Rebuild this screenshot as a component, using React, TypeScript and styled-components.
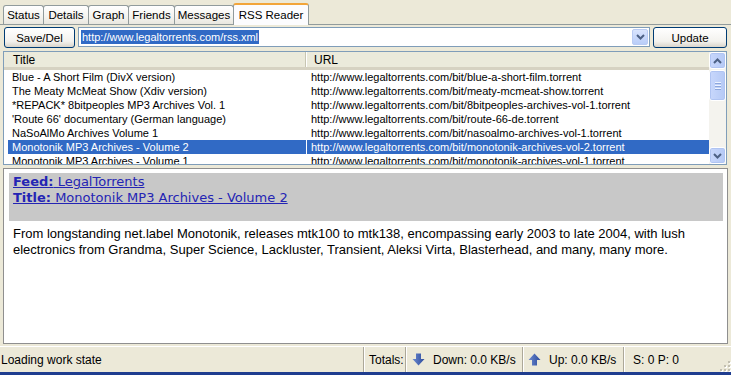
import styled, { createGlobalStyle } from "styled-components";

const GlobalStyle = createGlobalStyle`
  html, body {
    margin: 0;
    padding: 0;
    background: #ece9d8;
  }
  #root {
    width: 731px;
    height: 375px;
    overflow: hidden;
  }
`;

const Window = styled.div`
  display: flex;
  flex-direction: column;
  width: 731px;
  height: 375px;
  background: #ece9d8;
  font-family: "Liberation Sans", Arial, sans-serif;
  font-size: 11px;
  color: #000;
  box-sizing: border-box;
  border-bottom: 3px solid #1f3d8f;
`;

/* tabs */
const TabStrip = styled.div`
  display: flex;
  align-items: flex-end;
  height: 24px;
  padding-left: 3px;
  border-bottom: 1px solid #919b9c;
`;

const Tab = styled.div<{ $active?: boolean; $w: number }>`
  display: flex;
  align-items: center;
  justify-content: center;
  box-sizing: border-box;
  width: ${({ $w }) => $w + 1}px;
  height: ${({ $active }) => ($active ? "22px" : "19px")};
  margin-bottom: ${({ $active }) => ($active ? "-1px" : "0")};
  margin-right: -1px;
  border: 1px solid #919b9c;
  border-bottom: none;
  border-top: ${({ $active }) => ($active ? "2px solid #f2a53a" : "1px solid #919b9c")};
  border-radius: 3px 3px 0 0;
  background: ${({ $active }) =>
    $active ? "#fcfcfe" : "linear-gradient(#ffffff, #f4f3ee 60%, #e9e7df)"};
  font-size: 11.5px;
  position: relative;
  z-index: ${({ $active }) => ($active ? 1 : 0)};
`;

/* toolbar */
const Toolbar = styled.div`
  display: flex;
  align-items: flex-start;
  gap: 3px;
  padding: 2px 4px 0 4px;
  box-sizing: border-box;
  height: 25px;
`;

const Button = styled.button<{ $w: number }>`
  width: ${({ $w }) => $w}px;
  height: 21px;
  box-sizing: border-box;
  border: 1px solid #003c74;
  border-radius: 3px;
  background: linear-gradient(#ffffff, #f3f2ee 70%, #d9d5cb);
  font-family: "Liberation Sans", Arial, sans-serif;
  font-size: 11.5px;
  color: #000;
  padding: 0;
`;

const Combo = styled.div`
  flex: 1;
  height: 20px;
  box-sizing: border-box;
  border: 1px solid #7f9db9;
  background: #fff;
  display: flex;
  align-items: center;
  padding-left: 2px;
`;

const ComboText = styled.span`
  flex: 1;
  font-size: 11px;
  span {
    background: #316ac5;
    color: #fff;
    padding: 1px 1px;
  }
`;

const DropButton = styled.div`
  width: 16px;
  height: 16px;
  margin-right: 1px;
  box-sizing: border-box;
  border: 1px solid #b9cbf3;
  border-radius: 2px;
  background: linear-gradient(#d9e4fd, #b9cdf8);
  display: flex;
  align-items: center;
  justify-content: center;
`;

/* list view */
const ListView = styled.div`
  display: flex;
  margin: 1px 4px 0 3px;
  height: 114px;
  box-sizing: border-box;
  border: 1px solid #7f9db9;
  background: #fff;
`;

const ListBody = styled.div`
  flex: 1;
  overflow: hidden;
`;

const Cols = styled.div`
  display: grid;
  grid-template-columns: 302px 1fr;
`;

const HeaderRow = styled(Cols)`
  height: 18px;
  box-sizing: border-box;
  background: #ebeadb;
  border-bottom: 3px solid #d6d2c2;
`;

const HeaderCell = styled.div<{ $last?: boolean }>`
  display: flex;
  align-items: center;
  padding-left: ${({ $last }) => ($last ? "8px" : "9px")};
  font-size: 12px;
  border-right: ${({ $last }) => ($last ? "none" : "1px solid #c7c5b2")};
  box-shadow: ${({ $last }) => ($last ? "none" : "1px 0 0 #fff")};
`;

const Row = styled(Cols)<{ $sel?: boolean }>`
  height: 14px;
  color: ${({ $sel }) => ($sel ? "#fff" : "#000")};
`;

const Cell = styled.div<{ $sel?: boolean; $first?: boolean }>`
  display: flex;
  align-items: center;
  white-space: nowrap;
  overflow: hidden;
  margin-left: ${({ $first }) => ($first ? "4px" : "1px")};
  padding-left: 4px;
  background: ${({ $sel }) => ($sel ? "#316ac5" : "transparent")};
  font-size: 11px;
`;

const ScrollBar = styled.div`
  width: 17px;
  display: flex;
  flex-direction: column;
  background: #f4f3ee;
`;

const ScrollButton = styled.div`
  width: 17px;
  height: 17px;
  box-sizing: border-box;
  border: 1px solid #fff;
  border-radius: 3px;
  background: linear-gradient(90deg, #c8d7fc, #b5c9f5);
  box-shadow: inset 0 0 0 1px #b0c4f2;
  display: flex;
  align-items: center;
  justify-content: center;
`;

const Thumb = styled(ScrollButton)`
  height: 31px;
  margin-top: 1px;
  flex-direction: column;
  gap: 2px;
  i {
    display: block;
    width: 6px;
    height: 1px;
    background: #eef3ff;
    box-shadow: 0 1px 0 #8ca6dc;
  }
`;

const Track = styled.div`
  flex: 1;
`;

/* feed pane */
const FeedPane = styled.div`
  flex: 1;
  margin: 3px 3px 2px 3px;
  box-sizing: border-box;
  border: 1px solid #8f8f8f;
  box-shadow: inset 1px 1px 0 #fff;
  background: #fff;
  padding: 4px 4px 0 5px;
  overflow: hidden;
`;

const FeedHead = styled.div`
  background: #c8c8c8;
  padding: 1px 4px 15px 4px;
  font-family: "DejaVu Sans", Verdana, sans-serif;
  font-size: 13px;
  line-height: 16px;
`;

const FeedLink = styled.a`
  display: block;
  color: #2424b4;
  text-decoration: underline;
  b {
    font-weight: bold;
  }
`;

const Description = styled.p`
  margin: 5px 0 0 0;
  padding: 0 4px;
  font-family: "Liberation Sans", Arial, sans-serif;
  font-size: 13px;
  line-height: 16px;
`;

/* status bar */
const StatusBar = styled.div`
  display: flex;
  height: 25px;
  border-top: 1px solid #fff;
  font-size: 12px;
`;

const StatusCell = styled.div<{ $w?: number; $pad?: number }>`
  display: flex;
  align-items: center;
  gap: 8px;
  box-sizing: border-box;
  flex: ${({ $w }) => ($w ? `0 0 ${$w}px` : "1")};
  padding-left: ${({ $pad }) => $pad ?? 5}px;
  border-left: ${({ $w }) => ($w ? "1px solid #aca899" : "none")};
  box-shadow: ${({ $w }) => ($w ? "inset 1px 0 0 #fff" : "none")};
  white-space: nowrap;
`;

const Grip = styled.div`
  flex: 0 0 18px;
  display: flex;
  align-items: flex-end;
  justify-content: flex-end;
`;

const Arrow = ({ up }: { up?: boolean }) => (
  <svg width="13" height="13" viewBox="0 0 13 13">
    <defs>
      <linearGradient id={up ? "ga" : "gb"} x1="0" y1="0" x2="1" y2="0">
        <stop offset="0" stopColor="#6d8ad0" />
        <stop offset="1" stopColor="#2c4b9c" />
      </linearGradient>
    </defs>
    <path
      d={up ? "M6.5 0.5 L12.5 7 L9 7 L9 12.5 L4 12.5 L4 7 L0.5 7 Z" : "M4 0.5 L9 0.5 L9 6 L12.5 6 L6.5 12.5 L0.5 6 L4 6 Z"}
      fill={`url(#${up ? "ga" : "gb"})`}
    />
  </svg>
);

const Chevron = ({ up }: { up?: boolean }) => (
  <svg width="9" height="6" viewBox="0 0 9 6">
    <path
      d={up ? "M1 5 L4.5 1.5 L8 5" : "M1 1 L4.5 4.5 L8 1"}
      fill="none"
      stroke="#4d6185"
      strokeWidth="2"
    />
  </svg>
);

const rows = [
  ["Blue - A Short Film (DivX version)", "http://www.legaltorrents.com/bit/blue-a-short-film.torrent"],
  ["The Meaty McMeat Show (Xdiv version)", "http://www.legaltorrents.com/bit/meaty-mcmeat-show.torrent"],
  ["*REPACK* 8bitpeoples MP3 Archives Vol. 1", "http://www.legaltorrents.com/bit/8bitpeoples-archives-vol-1.torrent"],
  ["'Route 66' documentary (German language)", "http://www.legaltorrents.com/bit/route-66-de.torrent"],
  ["NaSoAlMo Archives Volume 1", "http://www.legaltorrents.com/bit/nasoalmo-archives-vol-1.torrent"],
  ["Monotonik MP3 Archives - Volume 2", "http://www.legaltorrents.com/bit/monotonik-archives-vol-2.torrent"],
  ["Monotonik MP3 Archives - Volume 1", "http://www.legaltorrents.com/bit/monotonik-archives-vol-1.torrent"],
];

const tabs: [string, number][] = [
  ["Status", 40],
  ["Details", 45],
  ["Graph", 40],
  ["Friends", 46],
  ["Messages", 59],
  ["RSS Reader", 75],
];

export default function App() {
  return (
    <Window>
      <GlobalStyle />
      <TabStrip>
        {tabs.map(([t, w]) => (
          <Tab key={t} $w={w} $active={t === "RSS Reader"}>
            {t}
          </Tab>
        ))}
      </TabStrip>

      <Toolbar>
        <Button $w={71}>Save/Del</Button>
        <Combo>
          <ComboText>
            <span>http://www.legaltorrents.com/rss.xml</span>
          </ComboText>
          <DropButton>
            <Chevron />
          </DropButton>
        </Combo>
        <Button $w={74}>Update</Button>
      </Toolbar>

      <ListView>
        <ListBody>
          <HeaderRow>
            <HeaderCell>Title</HeaderCell>
            <HeaderCell $last>URL</HeaderCell>
          </HeaderRow>
          {rows.map(([title, url], i) => {
            const sel = i === 5;
            return (
              <Row key={i} $sel={sel}>
                <Cell $first $sel={sel}>{title}</Cell>
                <Cell $sel={sel}>{url}</Cell>
              </Row>
            );
          })}
        </ListBody>
        <ScrollBar>
          <ScrollButton>
            <Chevron up />
          </ScrollButton>
          <Thumb>
            <i />
            <i />
            <i />
          </Thumb>
          <Track />
          <ScrollButton>
            <Chevron />
          </ScrollButton>
        </ScrollBar>
      </ListView>

      <FeedPane>
        <FeedHead>
          <FeedLink href="#">
            <b>Feed:</b> LegalTorrents
          </FeedLink>
          <FeedLink href="#">
            <b>Title:</b> Monotonik MP3 Archives - Volume 2
          </FeedLink>
        </FeedHead>
        <Description>
          From longstanding net.label Monotonik, releases mtk100 to mtk138, encompassing early 2003 to late 2004, with
          lush electronics from Grandma, Super Science, Lackluster, Transient, Aleksi Virta, Blasterhead, and many, many
          more.
        </Description>
      </FeedPane>

      <StatusBar>
        <StatusCell $pad={1}>Loading work state</StatusCell>
        <StatusCell $w={42}>Totals:</StatusCell>
        <StatusCell $w={117} $pad={6}>
          <Arrow />
          Down: 0.0 KB/s
        </StatusCell>
        <StatusCell $w={101} $pad={5}>
          <Arrow up />
          Up: 0.0 KB/s
        </StatusCell>
        <StatusCell $w={90} $pad={9}>
          S: 0 P: 0
        </StatusCell>
        <Grip>
          <svg width="12" height="12" viewBox="0 0 12 12">
            {[
              [9, 1],
              [9, 5],
              [5, 5],
              [9, 9],
              [5, 9],
              [1, 9],
            ].map(([x, y]) => (
              <g key={`${x}-${y}`}>
                <rect x={x + 1} y={y + 1} width="2" height="2" fill="#fff" />
                <rect x={x} y={y} width="2" height="2" fill="#c2bfb0" />
              </g>
            ))}
          </svg>
        </Grip>
      </StatusBar>
    </Window>
  );
}
